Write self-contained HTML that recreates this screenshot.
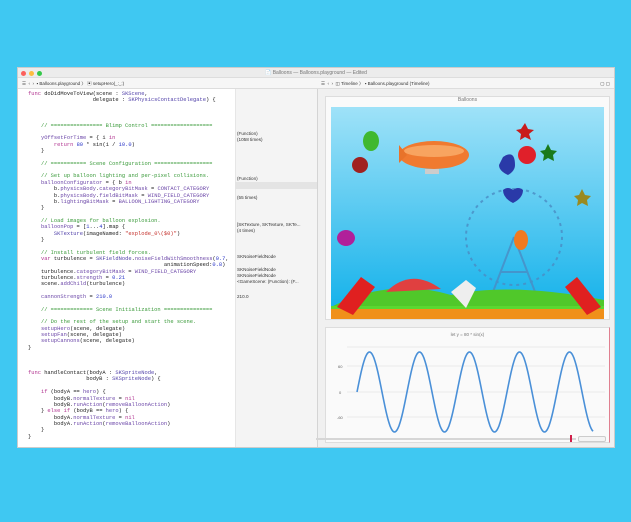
<!DOCTYPE html>
<html><head><meta charset="utf-8"><style>
*{margin:0;padding:0;box-sizing:border-box}
body{width:631px;height:522px;background:#3fc8f2;position:relative;overflow:hidden;font-family:"Liberation Sans",sans-serif}
.win{position:absolute;left:17px;top:67px;width:598px;height:381px;background:#fff;border:1px solid #ccc}
.tb{position:absolute;left:0;top:0;width:100%;height:10px;background:#ececec;border-bottom:1px solid #ddd;font-size:5px;color:#777;text-align:center;line-height:10px}
.dot{position:absolute;top:2.5px;width:5px;height:5px;border-radius:50%}
.bar{position:absolute;top:10px;height:11px;background:#f6f6f6;border-bottom:1px solid #ddd;font-size:4.5px;line-height:11px;color:#333}
.code{position:absolute;font-family:"Liberation Mono",monospace;font-size:5.4px;white-space:pre;color:#222;line-height:6.35px}
.k{color:#b0328f}.c{color:#3a9a3a}.t{color:#4f3fa8}.s{color:#c4302b}.n{color:#2a35c8}.p{color:#6b46a8}
.res{position:absolute;font-size:4.6px;color:#333;white-space:pre;line-height:6px}
</style></head><body>
<div class="win">
 <div class="tb">📄 Balloons — Balloons.playground — Edited
  <div class="dot" style="left:3px;background:#fc605c"></div>
  <div class="dot" style="left:11px;background:#fdbc40"></div>
  <div class="dot" style="left:19px;background:#34c84a"></div>
 </div>
 <div class="bar" style="left:0;width:299px;padding-left:4px">☰ &nbsp;‹ &nbsp;› &nbsp;▪ Balloons.playground 〉 ▣ setupHero(_:_:)</div>
 <div class="bar" style="left:299px;width:297px;padding-left:4px">☰ &nbsp;‹ &nbsp;› &nbsp;◫ Timeline 〉 ▪ Balloons.playground (Timeline)<span style="position:absolute;right:4px">▢ ▢</span></div>
 <div style="position:absolute;left:217px;top:21px;width:82px;height:358px;background:#f4f4f4;border-left:1px solid #e6e6e6"></div>
 <div style="position:absolute;left:217px;top:114px;width:82px;height:7px;background:#e4e4e4"></div>
 <div style="position:absolute;left:299px;top:21px;width:297px;height:358px;background:#f0f0f0;border-left:1px solid #d4d4d4"></div>
</div>

<div class="code" style="left:28px;top:91px"><span class="k">func</span> doDidMoveToView(scene : <span class="t">SKScene</span>,
                    delegate : <span class="t">SKPhysicsContactDelegate</span>) {



    <span class="c">// ================ Blimp Control ===================</span>

    <span class="p">yOffsetForTime</span> = { i <span class="k">in</span>
        <span class="k">return</span> <span class="n">80</span> * sin(i / <span class="n">10.0</span>)
    }

    <span class="c">// =========== Scene Configuration ==================</span>

    <span class="c">// Set up balloon lighting and per-pixel collisions.</span>
    <span class="p">balloonConfigurator</span> = { b <span class="k">in</span>
        b.<span class="p">physicsBody</span>.<span class="p">categoryBitMask</span> = <span class="p">CONTACT_CATEGORY</span>
        b.<span class="p">physicsBody</span>.<span class="p">fieldBitMask</span> = <span class="p">WIND_FIELD_CATEGORY</span>
        b.<span class="p">lightingBitMask</span> = <span class="p">BALLOON_LIGHTING_CATEGORY</span>
    }

    <span class="c">// Load images for balloon explosion.</span>
    <span class="p">balloonPop</span> = [<span class="n">1</span>...<span class="n">4</span>].map {
        <span class="t">SKTexture</span>(imageNamed: <span class="s">"explode_0\($0)"</span>)
    }

    <span class="c">// Install turbulent field forces.</span>
    <span class="k">var</span> turbulence = <span class="t">SKFieldNode</span>.<span class="p">noiseFieldWithSmoothness</span>(<span class="n">0.7</span>,
                                          animationSpeed:<span class="n">0.8</span>)
    turbulence.<span class="p">categoryBitMask</span> = <span class="p">WIND_FIELD_CATEGORY</span>
    turbulence.<span class="p">strength</span> = <span class="n">0.21</span>
    scene.<span class="p">addChild</span>(turbulence)

    <span class="p">cannonStrength</span> = <span class="n">210.0</span>

    <span class="c">// ============= Scene Initialization ===============</span>

    <span class="c">// Do the rest of the setup and start the scene.</span>
    <span class="p">setupHero</span>(scene, delegate)
    <span class="p">setupFan</span>(scene, delegate)
    <span class="p">setupCannons</span>(scene, delegate)
}



<span class="k">func</span> handleContact(bodyA : <span class="t">SKSpriteNode</span>,
                  bodyB : <span class="t">SKSpriteNode</span>) {

    <span class="k">if</span> (bodyA == <span class="p">hero</span>) {
        bodyB.<span class="p">normalTexture</span> = <span class="k">nil</span>
        bodyB.<span class="p">runAction</span>(<span class="p">removeBalloonAction</span>)
    } <span class="k">else if</span> (bodyB == <span class="p">hero</span>) {
        bodyA.<span class="p">normalTexture</span> = <span class="k">nil</span>
        bodyA.<span class="p">runAction</span>(<span class="p">removeBalloonAction</span>)
    }
}</div>

<div class="res" style="left:237px;top:131px">(Function)
(1058 times)</div>
<div class="res" style="left:237px;top:176px">(Function)</div>
<div class="res" style="left:237px;top:195px">(55 times)</div>
<div class="res" style="left:237px;top:222px">[SKTexture, SKTexture, SKTe...
(4 times)</div>
<div class="res" style="left:237px;top:254px">SKNoiseFieldNode</div>
<div class="res" style="left:237px;top:267px">SKNoiseFieldNode
SKNoiseFieldNode
&lt;GameScene: (Function): (F...</div>
<div class="res" style="left:237px;top:294px">210.0</div>

<!-- game panel -->
<div style="position:absolute;left:325px;top:96px;width:285px;height:224px;background:#fafafa;border:1px solid #ddd"></div>
<div style="position:absolute;left:325px;top:97px;width:285px;font-size:5px;color:#777;text-align:center">Balloons</div>
<svg style="position:absolute;left:331px;top:107px" width="273" height="212" viewBox="0 0 273 212">
<defs><linearGradient id="sky" x1="0" y1="0" x2="0" y2="1"><stop offset="0" stop-color="#9fe2f8"/><stop offset="1" stop-color="#0fb0ea"/></linearGradient></defs>
<rect width="273" height="212" fill="url(#sky)"/>
<g stroke="#4a8cc4" stroke-width="2" fill="none" opacity="0.8"><circle cx="183" cy="130" r="48" stroke-dasharray="3 4"/><path d="M183 130 L160 190 M183 130 L206 190 M170 165 H196"/></g>
<ellipse cx="103" cy="48" rx="35" ry="14" fill="#f07a30"/><ellipse cx="103" cy="44" rx="30" ry="6" fill="#f8a460"/>
<path d="M68 38 l8 10 l-8 8z" fill="#e8732a"/><rect x="94" y="62" width="14" height="5" fill="#ccc"/>
<path d="M190 22 l4 -6 l3 6 l6 1 -5 4 2 6 -6 -3 -5 3 1 -6 -5 -4z" fill="#c81b1b"/>
<circle cx="196" cy="48" r="9" fill="#e0202a"/>
<path d="M172 50 q12 -8 12 8 q0 6 -7 10 q-9 -4 -9 -10z" fill="#2a3aa8"/>
<path d="M214 43 l3 -6 3 6 6 1 -4 4 1 6 -6 -3 -5 3 1 -6 -4 -4z" fill="#1a7a1a"/>
<path d="M172 83 q5 -4 10 0 q5 -4 10 0 q0 8 -10 13 q-10 -5 -10 -13z" fill="#2a3aa8"/>
<path d="M248 88 l3 -6 3 6 6 1 -4 4 1 6 -6 -3 -5 3 1 -6 -4 -4z" fill="#9a8a20"/>
<ellipse cx="190" cy="133" rx="7" ry="10" fill="#f07a20"/>
<ellipse cx="40" cy="34" rx="8" ry="10" fill="#40b830"/>
<ellipse cx="29" cy="58" rx="8" ry="8" fill="#a02020"/>
<ellipse cx="15" cy="131" rx="9" ry="8" fill="#b0209a"/>
<path d="M0 200 Q60 170 120 188 Q180 175 273 193 V212 H0z" fill="#50c82a"/>
<path d="M55 185 Q80 160 110 182z" fill="#e04040"/>
<rect x="0" y="202" width="273" height="10" fill="#f0901a"/>
<rect x="0" y="199" width="273" height="3" fill="#5ad830"/>
<path d="M6 200 L30 170 L44 180 L22 208z" fill="#e02020"/><path d="M270 200 L246 170 L234 180 L256 208z" fill="#e02020"/>
<path d="M120 185 l15 -12 10 8 -10 20z" fill="#eee"/>
</svg>

<!-- chart panel -->
<div style="position:absolute;left:325px;top:327px;width:285px;height:116px;background:#fafafa;border:1px solid #ddd;border-right:1px solid #e08090"></div>
<div style="position:absolute;left:325px;top:332px;width:285px;font-size:4.5px;color:#777;text-align:center">let y = 80 * sin(x)</div>
<svg style="position:absolute;left:325px;top:327px" width="286" height="120">
<g stroke="#e4e4e4" stroke-width="0.7"><line x1="22" y1="20" x2="280" y2="20"/><line x1="22" y1="39" x2="280" y2="39"/><line x1="22" y1="65" x2="280" y2="65"/><line x1="22" y1="90" x2="280" y2="90"/></g>
<g font-size="4" fill="#666" font-family="Liberation Sans"><text x="13" y="41">60</text><text x="14" y="67">0</text><text x="12" y="92">-60</text></g>
<path id="w" fill="none" stroke="#4a90d8" stroke-width="1.6" d=""/>
</svg>
<div style="position:absolute;left:316px;top:438px;width:260px;height:2px;background:#d6d6d6"></div>
<div style="position:absolute;left:570px;top:435px;width:1.5px;height:7px;background:#d0204a"></div>
<div style="position:absolute;left:578px;top:436px;width:28px;height:6px;border:1px solid #ccc;border-radius:2px;background:#f4f4f4"></div>
<script>
var d="";for(var x=32;x<=268;x+=1){var y=65+40*Math.sin((x-32)/50*2*Math.PI+Math.PI);d+=(x==32?"M":"L")+x+" "+y.toFixed(1)+" ";}
document.getElementById("w").setAttribute("d",d);
</script>
</body></html>
